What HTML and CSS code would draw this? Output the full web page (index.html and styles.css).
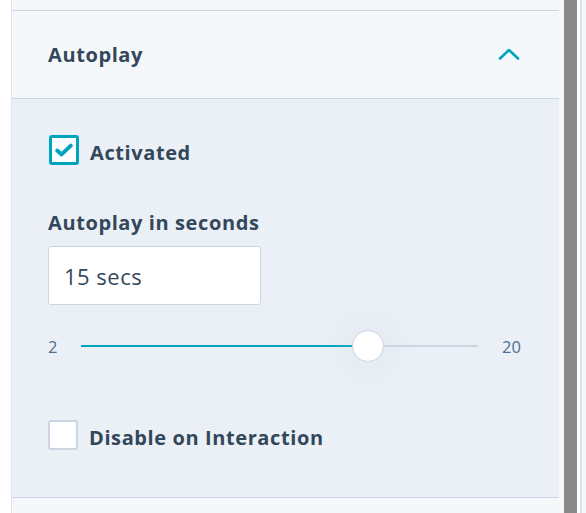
FILE: index.html
```html
<!DOCTYPE html>
<html>
<head>
<meta charset="utf-8">
<link rel="stylesheet" href="styles.css">
</head>
<body>
<div class="page">
  <div class="gutter"></div>
  <div class="panel">
    <div class="top"></div>
    <div class="header">
      <span class="title">Autoplay</span>
      <svg class="chev" width="22" height="14" viewBox="0 0 22 14"><path d="M2 11.5 L11 3 L20 11.5" fill="none" stroke="#00a4bd" stroke-width="2.6" stroke-linecap="round" stroke-linejoin="round"/></svg>
    </div>
    <div class="body">
      <label class="check-row first">
        <span class="box checked">
          <svg width="20" height="16" viewBox="0 0 20 16"><path d="M3.2 8.6 L7.6 12.4 L16.8 3.6" fill="none" stroke="#00a4bd" stroke-width="4" stroke-linecap="round" stroke-linejoin="round"/></svg>
        </span>
        <span class="check-label">Activated</span>
      </label>
      <div class="field-label">Autoplay in seconds</div>
      <div class="input">15 secs</div>
      <div class="slider">
        <span class="lim">2</span>
        <div class="track">
          <div class="fill" style="width:72.2%"></div>
          <div class="thumb" style="left:72.2%"></div>
        </div>
        <span class="lim max">20</span>
      </div>
      <label class="check-row second">
        <span class="box"></span>
        <span class="check-label">Disable on Interaction</span>
      </label>
    </div>
    <div class="footer"></div>
  </div>
  <div class="scroll">
    <div class="gap"></div>
    <div class="bar"></div>
    <div class="gap2"></div>
    <div class="line"></div>
    <div class="rest"></div>
  </div>
</div>
</body>
</html>
```
FILE: styles.css
```css
* { box-sizing: border-box; }
html, body { margin: 0; padding: 0; }
body {
  width: 586px;
  height: 513px;
  overflow: hidden;
  background: #ffffff;
  font-family: "Open Sans", "Noto Sans", sans-serif;
  color: #33475b;
}
.page {
  display: flex;
  height: 513px;
}
.gutter {
  width: 11px;
  background: #ffffff;
}
.panel {
  width: 548px;
  border-left: 1px solid #dfe3eb;
  display: flex;
  flex-direction: column;
}
.top {
  height: 10px;
  background: #f5f8fa;
}
.header {
  height: 88px;
  border-top: 1px solid #cbd6e2;
  background: #f5f8fa;
  display: flex;
  align-items: center;
  justify-content: space-between;
  padding: 0 39px 0 36px;
}
.title {
  font-size: 20px;
  font-weight: 700;
  letter-spacing: 0.6px;
  margin-top: 0;
}
.chev { display: block; margin-top: -1px; }
.body {
  height: 399px;
  border-top: 1px solid #cbd6e2;
  background: #eaf0f6;
  padding: 36px 0 0 36px;
}
.check-row {
  display: flex;
  align-items: center;
  height: 30px;
}
.box {
  width: 30px;
  height: 30px;
  border: 2.5px solid #cbd6e2;
  border-radius: 3px;
  background: #ffffff;
  display: flex;
  align-items: center;
  justify-content: center;
}
.box.checked {
  border: 3px solid #00a4bd;
}
.check-label {
  font-size: 20px;
  font-weight: 700;
  letter-spacing: 0.6px;
  margin-left: 11px;
  margin-top: 4px;
}
.first { margin-left: 1px; }
.field-label {
  margin-top: 45px;
  font-size: 20px;
  font-weight: 700;
  letter-spacing: 0.6px;
  line-height: 26px;
  height: 26px;
}
.input {
  margin-top: 10px;
  width: 213px;
  height: 59px;
  background: #ffffff;
  border: 1px solid #cbd6e2;
  border-radius: 3px;
  padding-left: 15px;
  display: flex;
  align-items: center;
  font-size: 22px;
  letter-spacing: 0.5px;
  font-weight: 400;
}
.slider {
  margin-top: 25px;
  height: 32px;
  display: flex;
  align-items: center;
  width: 474px;
}
.lim {
  font-size: 16.5px;
  color: #516f90;
  width: 33px;
}
.lim.max {
  width: auto;
  margin-left: 24px;
}
.track {
  position: relative;
  width: 397px;
  height: 2px;
  background: #cbd6e2;
}
.fill {
  height: 2px;
  background: #00a4bd;
}
.thumb {
  position: absolute;
  top: -15px;
  width: 32px;
  height: 32px;
  margin-left: -16px;
  border-radius: 50%;
  background: #ffffff;
  border: 1.5px solid #cbd6e2;
  box-shadow: 0 0 18px 16px rgba(203, 214, 226, 0.12);
}
.second {
  margin-top: 58px;
}
.footer {
  flex: 1;
  border-top: 1px solid #cbd6e2;
  background: #f5f8fa;
}
.scroll {
  display: flex;
  flex: 1;
}
.gap { width: 5px; background: #f5f8fa; }
.bar { width: 13px; background: #8a8a8a; }
.gap2 { width: 3px; background: #ffffff; }
.line { width: 2px; background: #dfe3eb; }
.rest { flex: 1; background: #f5f8fa; }
```
